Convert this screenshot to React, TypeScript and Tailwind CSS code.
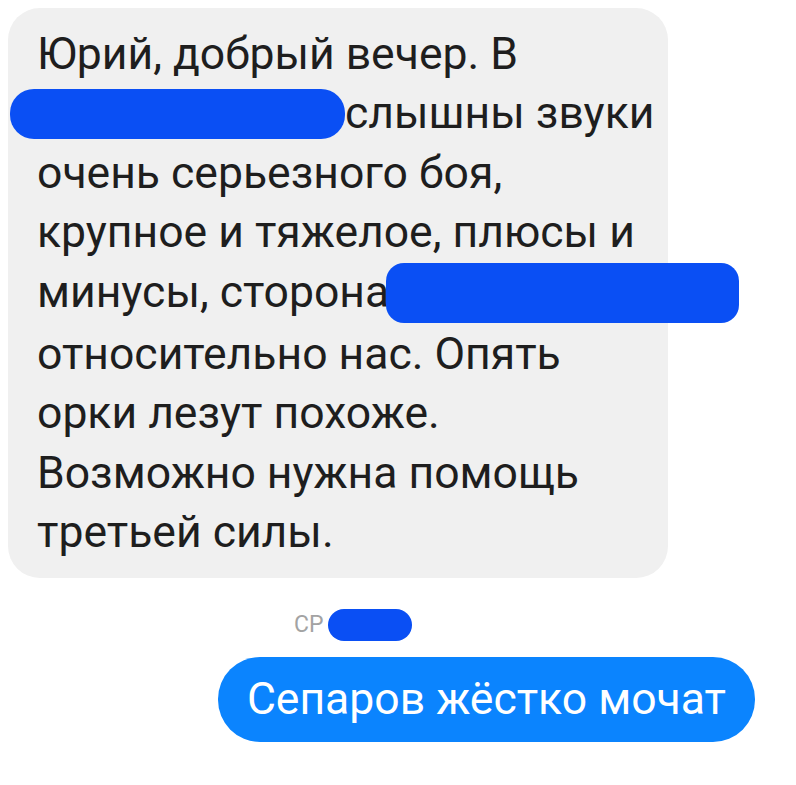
const lines = [
  "Юрий, добрый вечер. В",
  "__BLOB1__слышны звуки",
  "очень серьезного боя,",
  "крупное и тяжелое, плюсы и",
  "минусы, сторона__BLOB2__",
  "относительно нас. Опять",
  "орки лезут похоже.",
  "Возможно нужна помощь",
  "третьей силы.",
]

function Line({ text }: { text: string }) {
  if (text.startsWith("__BLOB1__")) {
    return (
      <div className="whitespace-nowrap">
        <span className="inline-block align-middle -ml-[27px] w-[335px] h-[50px] rounded-[24px] bg-[#0a4ff4] -translate-y-[3px]" />
        {text.replace("__BLOB1__", "")}
      </div>
    )
  }
  if (text.endsWith("__BLOB2__")) {
    return (
      <div className="whitespace-nowrap">
        {text.replace("__BLOB2__", "")}
        <span className="inline-block align-middle -ml-[3px] w-[353px] h-[60px] rounded-[18px] bg-[#0a4ff4] -translate-y-[2px]" />
      </div>
    )
  }
  return <div className="whitespace-nowrap">{text}</div>
}

export default function App() {
  return (
    <div className="w-[796px] h-[785px] bg-white overflow-hidden font-['Roboto',sans-serif]">
      {/* incoming message */}
      <div className="ml-2 mt-2 w-[660px] rounded-[32px] bg-[#f0f0f0] pl-[29px] pt-[17px] pb-[15px] text-[44.5px] leading-[59.4px] text-[#1e1e1e]">
        {lines.map((l, i) => (
          <Line key={i} text={l} />
        ))}
      </div>

      {/* sender label */}
      <div className="mt-[31px] pl-[294px] flex items-center h-[32px]">
        <span className="text-[23px] text-[#a3a3a3] leading-none">СР</span>
        <span className="ml-[5px] inline-block w-[84px] h-[32px] rounded-[16px] bg-[#0a4ff4]" />
      </div>

      {/* outgoing message */}
      <div className="mt-[16px] flex justify-end pr-[41px]">
        <div className="h-[85px] rounded-[42px] bg-[#0b84fe] px-[29px] flex items-center text-[44.5px] text-white whitespace-nowrap">
          Сепаров жёстко мочат
        </div>
      </div>
    </div>
  )
}
